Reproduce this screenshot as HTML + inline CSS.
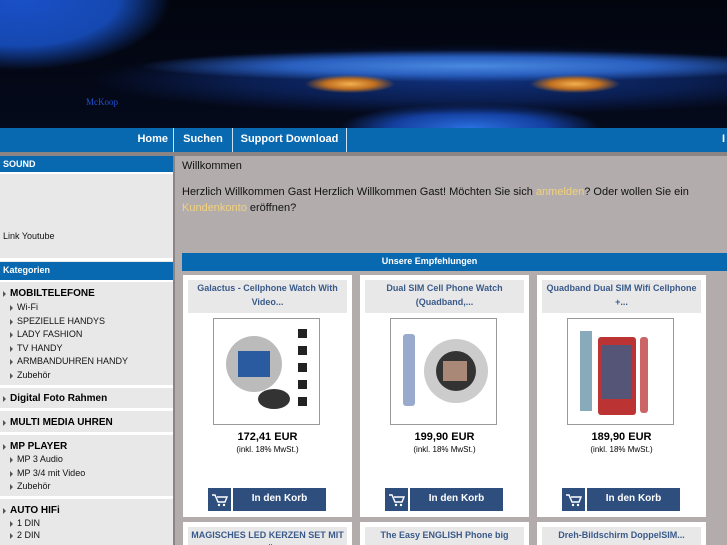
<!DOCTYPE html>
<html><head><meta charset="utf-8"><style>
*{margin:0;padding:0;box-sizing:border-box}
html,body{width:727px;height:545px;overflow:hidden}
body{background:#b3acac;font-family:"Liberation Sans",sans-serif;position:relative}
.hdr{position:absolute;left:0;top:0;width:727px;height:128px;background:
radial-gradient(ellipse 45px 9px at 350px 84px,#f4b050 0%,#c07020 55%,transparent 100%),
radial-gradient(ellipse 45px 9px at 575px 84px,#f4b050 0%,#c07020 55%,transparent 100%),
radial-gradient(ellipse 330px 16px at 470px 66px,#4a8ae0 0%,#2a60c0 55%,transparent 100%),
radial-gradient(ellipse 380px 35px at 470px 80px,#10307a 0%,#0a1e50 60%,transparent 100%),
radial-gradient(ellipse 130px 25px at 470px 128px,#2a70e0 0%,#1440a0 60%,transparent 100%),
radial-gradient(ellipse 150px 70px at 20px 0px,#1a50c8 0%,#1548b0 65%,transparent 100%),
linear-gradient(#02050e,#050a1c);}
.mk{position:absolute;left:86px;top:97px;color:#2050d0;font:9px "Liberation Serif",serif}
.nav{position:absolute;left:0;top:128px;width:727px;height:24px;background:#0868b0}
.nav span{position:absolute;top:0;height:24px;line-height:22px;color:#fff;font-weight:bold;font-size:11px;border-right:1px solid #cfe0f0}
.strip{position:absolute;left:0;top:152px;width:727px;height:4px;background:#8a8484}
.side{position:absolute;left:0;top:156px;width:173px;height:389px;background:#e8e8e8}
.bh{position:absolute;left:0;width:173px;height:18px;background:#0868b0;color:#fff;font-weight:bold;font-size:9px;line-height:16px;padding-left:3px;border-bottom:2px solid #fff}
.sep{position:absolute;left:0;width:173px;height:3px;background:#fff}
.c{position:absolute;font-size:9px;color:#111;white-space:nowrap}
.c.b{font-weight:bold;font-size:10px;color:#000}
.c:before{content:"";display:inline-block;border-left:3px solid #555;border-top:3px solid transparent;border-bottom:3px solid transparent;margin-right:4px;vertical-align:-1px}
.c.n:before{display:none}
.main{position:absolute;left:173px;top:156px;width:554px;height:389px;border-left:2px solid #8a8484}
.t{position:absolute;color:#111;font-size:11px;white-space:nowrap}
.y{color:#f2d27a}
.emp{position:absolute;left:182px;top:253px;width:545px;height:18px;background:#0868b0;color:#fff;font-weight:bold;font-size:9px;text-align:center;line-height:16px;padding-right:50px}
.card{position:absolute;width:169px;height:242px;background:#fff;overflow:hidden}
.ct{position:absolute;left:5px;top:5px;width:159px;height:33px;background:#e8e8e8;color:#3a5a8a;font-weight:bold;font-size:9px;text-align:center;line-height:14px;padding-top:1px}
.im{position:absolute;left:30px;top:43px;width:107px;height:107px;border:1px solid #999;background:#fff}
.pr{position:absolute;left:0;top:156px;width:169px;text-align:center;font-weight:bold;font-size:11px;color:#000}
.mw{position:absolute;left:0;top:170px;width:169px;text-align:center;font-size:8px;color:#000}
.cart{position:absolute;left:25px;top:213px;width:23px;height:23px;background:#2e4f7e}
.btn{position:absolute;left:50px;top:213px;width:93px;height:23px;background:#2e4f7e;color:#fff;font-weight:bold;font-size:10px;text-align:center;line-height:22px}
</style></head><body>
<div class="hdr"></div><div class="mk">McKoop</div>
<div class="nav">
<span style="left:0;width:174px;text-align:right;padding-right:5px">Home</span>
<span style="left:174px;width:59px;text-align:center">Suchen</span>
<span style="left:233px;width:114px;text-align:center">Support Download</span>
<span style="left:722px;border:none">I</span>
</div>
<div class="strip"></div>
<div class="side">
<div class="bh" style="top:0">SOUND</div>
<div class="c n" style="left:3px;top:75px">Link Youtube</div>
<div class="sep" style="top:102px"></div>
<div class="bh" style="top:106px;height:20px">Kategorien</div>
<div class="c b" style="left:3px;top:132px">MOBILTELEFONE</div>
<div class="c" style="left:10px;top:146px">Wi-Fi</div>
<div class="c" style="left:10px;top:160px">SPEZIELLE HANDYS</div>
<div class="c" style="left:10px;top:173px">LADY FASHION</div>
<div class="c" style="left:10px;top:187px">TV HANDY</div>
<div class="c" style="left:10px;top:200px">ARMBANDUHREN HANDY</div>
<div class="c" style="left:10px;top:214px">Zubehör</div>
<div class="sep" style="top:229px"></div>
<div class="c b" style="left:3px;top:237px">Digital Foto Rahmen</div>
<div class="sep" style="top:252px"></div>
<div class="c b" style="left:3px;top:261px">MULTI MEDIA UHREN</div>
<div class="sep" style="top:276px"></div>
<div class="c b" style="left:3px;top:285px">MP PLAYER</div>
<div class="c" style="left:10px;top:298px">MP 3 Audio</div>
<div class="c" style="left:10px;top:312px">MP 3/4 mit Video</div>
<div class="c" style="left:10px;top:325px">Zubehör</div>
<div class="sep" style="top:340px"></div>
<div class="c b" style="left:3px;top:349px">AUTO HIFi</div>
<div class="c" style="left:10px;top:362px">1 DIN</div>
<div class="c" style="left:10px;top:374px">2 DIN</div>
</div>
<div class="main"></div>
<div class="t" style="left:182px;top:160px">Willkommen</div>
<div class="t" style="left:182px;top:186px">Herzlich Willkommen Gast Herzlich Willkommen Gast! Möchten Sie sich <span class="y">anmelden</span>? Oder wollen Sie ein</div>
<div class="t" style="left:182px;top:202px"><span class="y">Kundenkonto</span> eröffnen?</div>
<div class="emp">Unsere Empfehlungen</div>

<div class="card" style="left:183px;top:275px"><div class="ct">Galactus - Cellphone Watch With<br>Video...</div><div class="im"><svg width="107" height="107"><circle cx="40" cy="45" r="28" fill="#bbb"/><rect x="24" y="32" width="32" height="26" fill="#2a5aa0"/><ellipse cx="60" cy="80" rx="16" ry="10" fill="#333"/><g fill="#222"><rect x="84" y="10" width="9" height="9"/><rect x="84" y="27" width="9" height="9"/><rect x="84" y="44" width="9" height="9"/><rect x="84" y="61" width="9" height="9"/><rect x="84" y="78" width="9" height="9"/></g></svg></div><div class="pr">172,41 EUR</div><div class="mw">(inkl. 18% MwSt.)</div><div class="cart"></div><div class="btn">In den Korb</div></div>

<div class="card" style="left:360px;top:275px"><div class="ct">Dual SIM Cell Phone Watch<br>(Quadband,...</div><div class="im"><svg width="107" height="107"><rect x="12" y="15" width="12" height="72" rx="3" fill="#9ac"/><circle cx="65" cy="52" r="32" fill="#ccc"/><circle cx="65" cy="52" r="20" fill="#333"/><rect x="52" y="42" width="24" height="20" fill="#a87"/></svg></div><div class="pr">199,90 EUR</div><div class="mw">(inkl. 18% MwSt.)</div><div class="cart"></div><div class="btn">In den Korb</div></div>

<div class="card" style="left:537px;top:275px"><div class="ct">Quadband Dual SIM Wifi Cellphone<br>+...</div><div class="im"><svg width="107" height="107"><rect x="12" y="12" width="12" height="80" fill="#8ab"/><rect x="30" y="18" width="38" height="78" rx="3" fill="#b33"/><rect x="34" y="26" width="30" height="54" fill="#557"/><rect x="72" y="18" width="8" height="76" rx="3" fill="#c66"/></svg></div><div class="pr">189,90 EUR</div><div class="mw">(inkl. 18% MwSt.)</div><div class="cart"></div><div class="btn">In den Korb</div></div>

<div class="card" style="left:183px;top:522px;height:23px"><div class="ct">MAGISCHES LED KERZEN SET MIT<br>1 STÜCK</div></div>
<div class="card" style="left:360px;top:522px;height:23px"><div class="ct">The Easy ENGLISH Phone big<br>button</div></div>
<div class="card" style="left:537px;top:522px;height:23px"><div class="ct">Dreh-Bildschirm DoppelSIM...</div></div>
<svg style="position:absolute;left:0;top:0" width="727" height="545">
<g fill="none" stroke="#fff" stroke-width="1.4">
<path d="M212 495h3l3 7h7l2-5h-10"/><path d="M389 495h3l3 7h7l2-5h-10"/><path d="M566 495h3l3 7h7l2-5h-10"/>
</g>
<g fill="#fff"><circle cx="219" cy="505" r="1.2"/><circle cx="224" cy="505" r="1.2"/><circle cx="396" cy="505" r="1.2"/><circle cx="401" cy="505" r="1.2"/><circle cx="573" cy="505" r="1.2"/><circle cx="578" cy="505" r="1.2"/></g>
</svg>
</body></html>
